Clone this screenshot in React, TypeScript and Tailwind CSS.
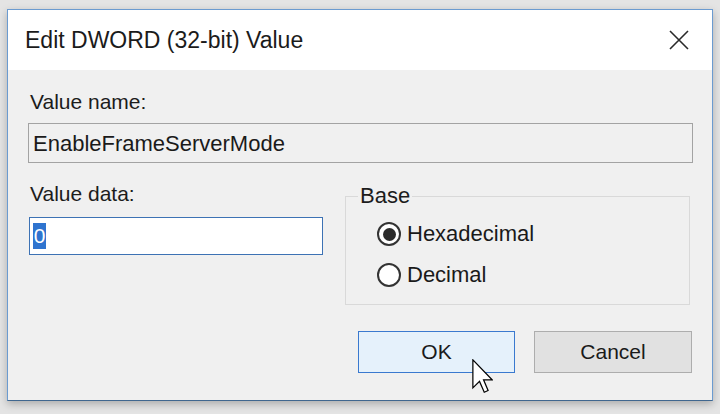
import React from "react";

const font = { fontFamily: '"Liberation Sans", Arial, sans-serif' };

function Radio({ checked, label }: { checked: boolean; label: string }) {
  return (
    <div className="flex h-[24px] items-center">
      <div className="flex h-[24px] w-[24px] items-center justify-center rounded-full border-[2px] border-[#333333] bg-white">
        {checked && <div className="h-[13px] w-[13px] rounded-full bg-[#2b2b2b]" />}
      </div>
      <span className="ml-[6px] text-[22px] leading-[24px] text-[#1a1a1a]">{label}</span>
    </div>
  );
}

export default function App() {
  return (
    <div
      className="h-[414px] w-[720px] overflow-hidden bg-[#e4e4e4] pl-[7px] pt-[9px]"
      style={font}
    >
      <div className="relative flex h-[392px] w-[706px] flex-col border border-[#6b9bd0] border-b-[#40678f] shadow-[0_3px_8px_rgba(0,0,0,0.25)]">
        {/* Title bar */}
        <div className="flex h-[60px] items-center justify-between bg-white pl-[17px] pr-[23px]">
          <span className="text-[23px] leading-[28px] text-[#1b1b1b]">Edit DWORD (32-bit) Value</span>
          <svg width="20" height="20" viewBox="0 0 20 20" className="block">
            <path d="M1 1 L19 19 M19 1 L1 19" stroke="#2a2a2a" strokeWidth="1.6" fill="none" />
          </svg>
        </div>

        {/* Body */}
        <div className="flex flex-1 flex-col bg-[#f0f0f0] pl-[20px] pr-[19px] pt-[20px]">
          <div className="ml-[2px] text-[21px] leading-[24px] text-[#1c1c1c]">Value name:</div>
          <div className="mt-[9px] flex h-[40px] items-center border border-[#a3a3a3] bg-[#f0f0f0] pl-[4px] text-[22px] text-[#1a1a1a]">
            EnableFrameServerMode
          </div>

          <div className="mt-[19px] flex">
            <div className="flex w-[295px] flex-col">
              <div className="ml-[2px] text-[21px] leading-[24px] text-[#1c1c1c]">Value data:</div>
              <div className="ml-[1px] mt-[11px] flex h-[38px] items-center border border-[#3d72b4] bg-white pl-[3px]">
                <span className="flex h-[26px] w-[13px] items-center justify-center bg-[#2f74cf] text-[21px] text-white">
                  0
                </span>
              </div>
            </div>

            <fieldset className="ml-[22px] mt-[2px] h-[121px] w-[345px] border border-[#d9d9d9] pb-[15px] pt-[14px]">
              <legend className="ml-[12px] px-[2px] text-[22px] leading-[24px] text-[#1c1c1c]">Base</legend>
              <div className="flex flex-col gap-[17px] pl-[31px]">
                <Radio checked label="Hexadecimal" />
                <Radio checked={false} label="Decimal" />
              </div>
            </fieldset>
          </div>

          <div className="mt-[26px] flex justify-end gap-[19px] pr-[1px]">
            <div className="flex h-[42px] w-[157px] items-center justify-center border border-[#3a79cf] bg-[#e5f1fb] text-[21px] text-[#1a1a1a]">
              OK
            </div>
            <div className="flex h-[42px] w-[158px] items-center justify-center border border-[#adadad] bg-[#e1e1e1] text-[21px] text-[#1a1a1a]">
              Cancel
            </div>
          </div>
        </div>

        {/* Mouse cursor */}
        <svg
          className="absolute left-[464px] top-[349px]"
          width="21"
          height="35"
          viewBox="0 0 12 20"
        >
          <path
            d="M0.5 0.5 L0.5 16.5 L4.3 12.8 L7 19 L9.2 18 L6.6 11.9 L11.5 11.9 Z"
            fill="#ffffff"
            stroke="#000000"
            strokeWidth="0.7"
            strokeLinejoin="miter"
          />
        </svg>
      </div>
    </div>
  );
}
